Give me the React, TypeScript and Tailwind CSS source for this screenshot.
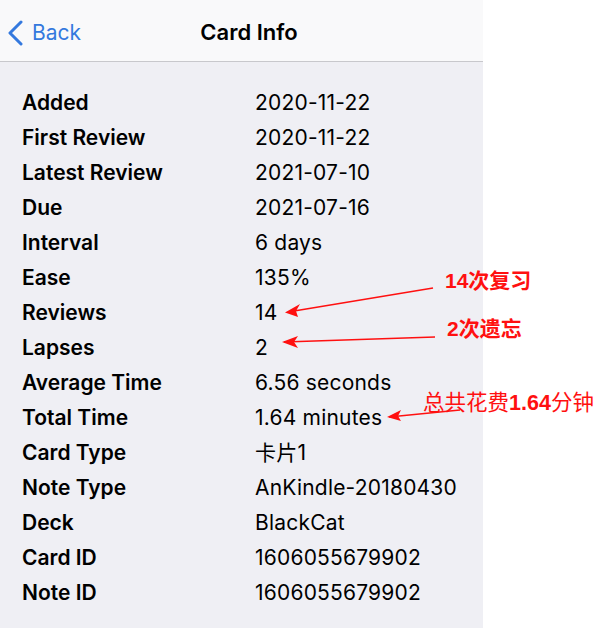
import React from "react";

const rows: [string, string][] = [
  ["Added", "2020-11-22"],
  ["First Review", "2020-11-22"],
  ["Latest Review", "2021-07-10"],
  ["Due", "2021-07-16"],
  ["Interval", "6 days"],
  ["Ease", "135%"],
  ["Reviews", "14"],
  ["Lapses", "2"],
  ["Average Time", "6.56 seconds"],
  ["Total Time", "1.64 minutes"],
  ["Card Type", "卡片1"],
  ["Note Type", "AnKindle-20180430"],
  ["Deck", "BlackCat"],
  ["Card ID", "1606055679902"],
  ["Note ID", "1606055679902"],
];

const font = { fontFamily: "Inter, 'Noto Sans CJK SC', sans-serif" };
const cjk = { fontFamily: "'Liberation Sans', 'Noto Sans CJK SC', sans-serif" };

const App = () => {
  return (
    <div className="relative flex w-[600px] h-[628px] bg-white overflow-hidden" style={font}>
      <div className="w-[483px] h-full bg-[#efeff4] flex flex-col">
        <div className="h-[62px] pt-[4px] bg-[#f9f9fa] border-b border-[#c8c8cc] flex items-center relative">
          <div className="flex items-center pl-[7px] gap-[8px] text-[#3479de]">
            <svg width="17" height="26" viewBox="0 0 17 26">
              <path
                d="M14 2 L3 13 L14 24"
                fill="none"
                stroke="#3479de"
                strokeWidth="3"
                strokeLinecap="round"
                strokeLinejoin="round"
              />
            </svg>
            <span className="text-[21px]">Back</span>
          </div>
          <div className="absolute left-0 right-0 pl-[15px] text-center text-[22px] font-semibold text-black pointer-events-none">
            Card Info
          </div>
        </div>
        <div className="pt-[23px] flex flex-col">
          {rows.map(([label, value]) => (
            <div key={label} className="h-[35px] flex items-center text-[21px] text-black">
              <span className="w-[255px] pl-[22px] font-semibold">{label}</span>
              <span className="tracking-[0.2px]">{value}</span>
            </div>
          ))}
        </div>
      </div>

      {/* annotations */}
      <svg className="absolute inset-0 pointer-events-none" width="600" height="628">
        <g stroke="#ff1010" strokeWidth="1.5" fill="none">
          <line x1="433" y1="288" x2="288" y2="312" />
          <line x1="435" y1="337" x2="284" y2="342" />
          <line x1="460" y1="410" x2="389" y2="417" />
        </g>
        <g fill="#ff1010">
          <path d="M285 312.5 L300 304 L296 311 L298 317 Z" />
          <path d="M282 342 L298 336 L294 342 L298 348 Z" />
          <path d="M387 417 L401 410 L398 416 L401 421 Z" />
        </g>
      </svg>
      <div className="absolute left-[445px] top-[265px] text-[21px] text-[#ff1010] font-bold" style={cjk}>
        14次复习
      </div>
      <div className="absolute left-[447px] top-[313px] text-[21px] text-[#ff1010] font-bold" style={cjk}>
        2次遗忘
      </div>
      <div className="absolute left-[423px] top-[387px] text-[21.5px] text-[#ff1010]" style={cjk}>
        总共花费<span className="font-bold">1.64</span>分钟
      </div>
    </div>
  );
};

export default App;
